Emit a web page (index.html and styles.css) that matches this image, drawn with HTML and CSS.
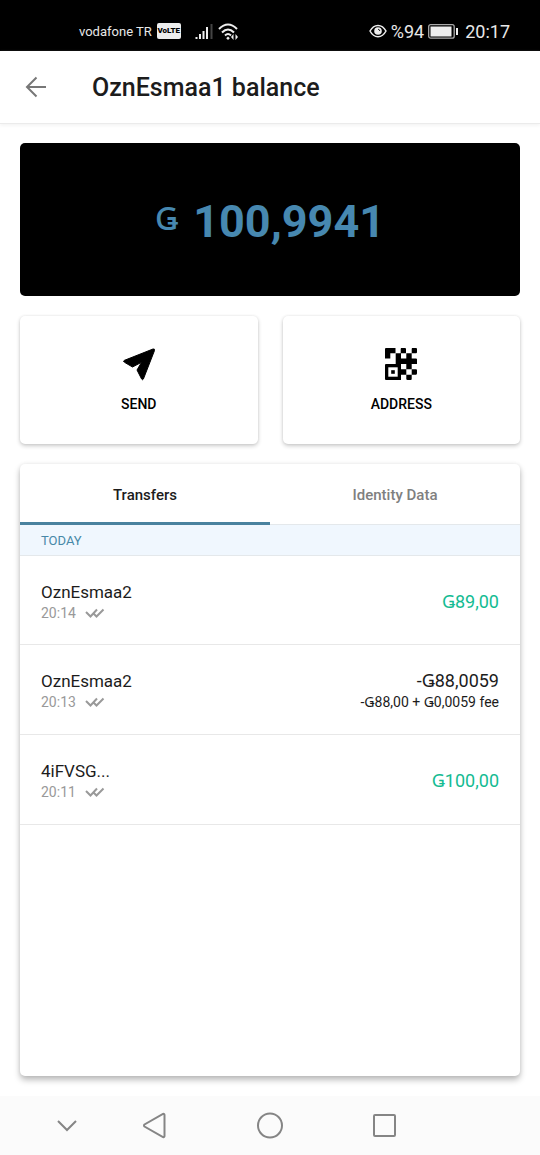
FILE: index.html
```html
<!DOCTYPE html>
<html lang="en">
<head>
<meta charset="utf-8">
<meta name="viewport" content="width=device-width, initial-scale=1">
<title>OznEsmaa1 balance</title>
<link rel="stylesheet" href="styles.css">
</head>
<body>
<svg width="0" height="0" class="defs" aria-hidden="true">
  <symbol id="checks" viewBox="0 0 20 10"><path d="M1 4L5.500 8.500L12 1.500M8.500 5.500L11.500 8.500L18.500 1.500" fill="none" stroke="currentColor" stroke-width="2"/></symbol>
</svg>
<div class="screen">
  <div class="status">
    <div class="status-left">
      <span class="carrier">vodafone TR</span>
      <span class="volte">VoLTE</span>
      <svg class="signal" width="18" height="17" viewBox="0 0 18 17"><path d="M1.500 16v-2M5 16v-5M8.500 16V8M12 16V4" stroke="#eee" stroke-width="2"/><path d="M16.500 16V1" stroke="#444" stroke-width="2"/></svg>
      <svg width="20" height="17" viewBox="0 0 20 17" fill="none" stroke="#eee" stroke-width="2"><path d="M1 6Q10-3 19 6M4 9.500Q10 3.500 16 9.500M7 12.500Q10 9.500 13 12.500"/><path d="M10 13.500l1.800 1.800L10 17l-1.800-1.700z" fill="#eee" stroke="none"/><path d="M13 14l2.500-3v6zM20 14l-2.500-3v6z" fill="#eee" stroke="none"/></svg>
    </div>
    <div class="status-right">
      <svg width="18" height="14" viewBox="0 0 18 14" fill="none" stroke="#eee"><path d="M1 7C5-.500 13-.500 17 7C13 14.500 5 14.500 1 7Z" stroke-width="1.500"/><circle cx="9" cy="7" r="3.800" fill="#eee" stroke="none"/><path d="M9 5.200A2 2 0 0 1 10.800 7" stroke="#222"/></svg>
      <span>%94</span>
      <svg class="battery" width="31" height="15" viewBox="0 0 31 15"><rect x=".700" y=".700" width="25.500" height="13.500" rx="2" fill="none" stroke="#aaa" stroke-width="1.300"/><rect x="2.500" y="2.500" width="21" height="10" fill="#eee"/><path d="M29 4v7" stroke="#eee" stroke-width="2"/></svg>
      <span>20:17</span>
    </div>
  </div>
  <header class="appbar">
    <button class="back" aria-label="Back"><svg width="22" height="22" viewBox="0 0 22 22" fill="none" stroke="#777" stroke-width="2"><path d="M21 11H2M11.500 1.500L2 11l9.500 9.500"/></svg></button>
    <h1>OznEsmaa1 balance</h1>
  </header>
  <main>
    <section class="hero"><span class="coin">Ǥ</span><span class="amount">100,9941</span></section>
    <div class="actions">
      <button class="action"><svg width="34" height="34" viewBox="0 0 34 34"><path d="M31 2L2.500 13.300q-2 .900 0 2L10.500 20 19.500 15.300 15 23l4.600 9q1 1.500 1.800 0L32.500 3.500q.400-2-1.500-1.500Z" stroke="#000" stroke-width="1" stroke-linejoin="round"/></svg>SEND</button>
      <button class="action"><svg width="34" height="34" viewBox="-1 -1 34 34"><path d="M1 0H10.500V5.300H5.300V10.500H0V1Q0 0 1 0M16 0h4q1 0 1 1v4.300h-5.300V1zM27 0h4q1 0 1 1v3q0 1.300-1 1.300h-4.300V1zM10.700 5.300H16v5.300h5.300V5.300h5.400v5.300H31q1 0 1 1v4.300h-5.300v5.300h-5.400V16h-5.300v5.300h5.300v5.400H16V32H1q-1 0-1-1V17q0-1 1-1h9.700zM26.700 21.300H31q1 0 1 1v3q0 1.400-1 1.400h-4.300V31q0 1-1 1h-3q-1.400 0-1.400-1v-4.300h5.400z"/><path d="M3.300 19.300h9.400v9.400H3.300z" fill="#fff"/><path d="M6.200 22.200h3.600v3.600H6.200z"/></svg>ADDRESS</button>
    </div>
    <section class="panel">
      <div class="tabs" role="tablist">
        <button class="tab active" role="tab" aria-selected="true">Transfers</button>
        <button class="tab" role="tab" aria-selected="false">Identity Data</button>
      </div>
      <h2 class="day">TODAY</h2>
      <ul class="list">
        <li class="row"><div><div class="name">OznEsmaa2</div><div class="time">20:14<svg width="20" height="10"><use href="#checks"/></svg></div></div><div class="sum in">Ǥ89,00</div></li>
        <li class="row"><div><div class="name">OznEsmaa2</div><div class="time">20:13<svg width="20" height="10"><use href="#checks"/></svg></div></div><div class="sum">-Ǥ88,0059<div class="fee">-Ǥ88,00 + Ǥ0,0059 fee</div></div></li>
        <li class="row"><div><div class="name">4iFVSG...</div><div class="time">20:11<svg width="20" height="10"><use href="#checks"/></svg></div></div><div class="sum in">Ǥ100,00</div></li>
      </ul>
    </section>
  </main>
  <nav class="nav">
    <button aria-label="Hide"><svg width="28" height="28" viewBox="0 0 28 28"><path d="M5 9l9 9 9-9"/></svg></button>
    <button aria-label="Back"><svg width="28" height="28" viewBox="0 0 28 28"><path d="M24.500 3v21q0 1.500-1.500 1L4.500 14.500q-1-1 0-2L23 2q1.500-.500 1.500 1Z"/></svg></button>
    <button aria-label="Home"><svg width="28" height="28" viewBox="0 0 28 28"><circle cx="14" cy="13.500" r="12"/></svg></button>
    <button aria-label="Recent apps"><svg width="28" height="28" viewBox="0 0 28 28"><rect x="3" y="3" width="21" height="21" rx="1"/></svg></button>
  </nav>
</div>
</body>
</html>
```
FILE: styles.css
```css
* { box-sizing: border-box; }
body { margin: 0; background: #fff; color: #1c1c1c; font-family: Roboto, "Noto Sans", sans-serif; }
button { border: 0; padding: 0; background: none; font: inherit; color: inherit; }
h1, h2, ul { margin: 0; padding: 0; }
svg { display: block; flex: none; }
.defs { position: absolute; }
.screen { min-height: 100vh; display: flex; flex-direction: column; }
.status { height: 51px; padding: 11px 30px 0 79px; background: #000; color: #e8e8e8; display: flex; justify-content: space-between; align-items: center; }
.status-left, .status-right { display: flex; align-items: center; }
.status-left { gap: 5px; font-size: 13px; }
.status-right { gap: 4px; font-size: 18px; }
.volte { background: #eee; color: #000; border-radius: 2px; font-size: 8px; font-weight: 900; line-height: 16px; width: 24px; display: flex; justify-content: center; }
.signal { margin-left: 9px; }
.battery { margin-right: 2px; }
.appbar { height: 73px; display: flex; align-items: center; gap: 45px; padding-left: 25px; border-bottom: 1px solid #ebebeb; box-shadow: 0 2px 3px #f5f5f5; }
.appbar h1 { font-size: 25px; font-weight: 500; line-height: 32px; padding-top: 2px; }
main { flex: 1; display: flex; flex-direction: column; gap: 20px; padding: 19px 20px 20px; }
.hero { height: 153px; padding-top: 3px; border-radius: 5px; background: #000; color: #4788b0; display: flex; justify-content: center; align-items: center; gap: 15px; }
.coin { font-size: 32px; font-weight: 500; padding-bottom: 8px; }
.amount { font-size: 45px; font-weight: 700; }
.actions { display: grid; grid-template-columns: 1fr 1fr; gap: 25px; }
.action { height: 128px; display: flex; flex-direction: column; justify-content: center; align-items: center; gap: 13px; font-size: 14px; line-height: 20px; font-weight: 500; color: #000; }
.action, .panel { border-radius: 5px; background: #fff; box-shadow: 0 2px 4px rgba(0,0,0,.2), 0 0 3px rgba(0,0,0,.08); }
.panel { flex: 1; box-shadow: 0 4px 6px rgba(0,0,0,.26), 0 0 4px rgba(0,0,0,.08); }
.tabs { display: grid; grid-template-columns: 1fr 1fr; height: 61px; }
.tab { font-size: 15px; font-weight: 500; color: #808080; padding-top: 2px; border-bottom: 1px solid #e4e8eb; }
.tab.active { color: #1c1c1c; padding-top: 4px; border-bottom: 3px solid #4a829f; }
.day { background: #f0f7fe; color: #4788a8; font-size: 13px; font-weight: 400; line-height: 30px; padding: 1px 21px 0; height: 31px; border-bottom: 1px solid #e4e8eb; }
.list { list-style: none; }
.row { display: flex; justify-content: space-between; align-items: center; min-height: 89px; padding: 3px 21px 0; border-bottom: 1px solid #e8e8e8; }
.row + .row { min-height: 90px; }
.name { font-size: 17px; line-height: 22px; }
.time { display: flex; align-items: center; gap: 9px; font-size: 14px; line-height: 20px; color: #999; }
.sum { font-size: 18px; line-height: 22px; text-align: right; }
.in { color: #14bb92; }
.fee { font-size: 14px; line-height: 20px; }
.nav { height: 59px; background: #fbfbfb; display: grid; grid-template-columns: 14fr 14fr 20fr 22fr 30fr; grid-template-columns: 87fr 116fr 115fr 28fr; align-items: center; padding: 0 141px 0 53px; }
.nav button { justify-self: start; }
.nav path, .nav circle, .nav rect { fill: none; stroke: #858585; stroke-width: 2; }
```
